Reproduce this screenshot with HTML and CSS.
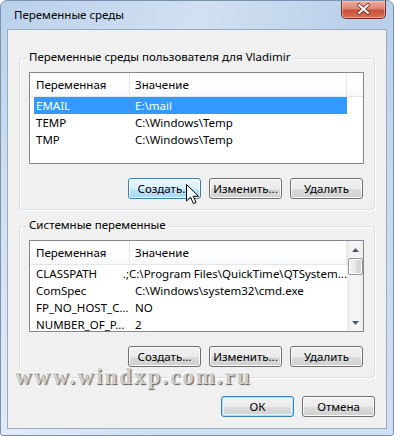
FILE: index.html
```html
<!DOCTYPE html>
<html lang="ru">
<head>
<meta charset="utf-8">
<title>Переменные среды</title>
<link rel="stylesheet" href="styles.css">
</head>
<body>
<div class="window">
  <div class="titlebar">
    <span class="title">Переменные среды</span>
    <div class="close">
      <svg width="45" height="18" viewBox="0 0 45 18">
        <path d="M18 5 L27 13 M27 5 L18 13" stroke="#5a2a22" stroke-width="3.6" stroke-linecap="round"/>
        <path d="M18 5 L27 13 M27 5 L18 13" stroke="#ffffff" stroke-width="2" stroke-linecap="round"/>
      </svg>
    </div>
  </div>
  <div class="client">
    <div class="group">
      <span class="legend">Переменные среды пользователя для Vladimir</span>
      <div class="list">
        <div class="list-main">
          <div class="header">
            <span class="hcol h1">Переменная</span>
            <span class="hcol h2">Значение</span>
          </div>
          <div class="row selected"><span class="c1">EMAIL</span><span class="c2">E:\mail</span></div>
          <div class="row"><span class="c1">TEMP</span><span class="c2">C:\Windows\Temp</span></div>
          <div class="row"><span class="c1">TMP</span><span class="c2">C:\Windows\Temp</span></div>
        </div>
      </div>
      <div class="buttons">
        <button class="btn hover">Создать...</button>
        <button class="btn">Изменить...</button>
        <button class="btn">Удалить</button>
      </div>
    </div>
    <div class="group second">
      <span class="legend">Системные переменные</span>
      <div class="list">
        <div class="list-main">
          <div class="header">
            <span class="hcol h1">Переменная</span>
            <span class="hcol h2">Значение</span>
          </div>
          <div class="row"><span class="c1">CLASSPATH</span><span class="c2">.;C:\Program Files\QuickTime\QTSystem...</span></div>
          <div class="row"><span class="c1">ComSpec</span><span class="c2">C:\Windows\system32\cmd.exe</span></div>
          <div class="row"><span class="c1">FP_NO_HOST_C...</span><span class="c2">NO</span></div>
          <div class="row"><span class="c1">NUMBER_OF_P...</span><span class="c2">2</span></div>
        </div>
        <div class="scrollbar">
          <div class="arrow">
            <svg width="7" height="4" viewBox="0 0 7 4"><path d="M0 4 L3.5 0 L7 4 Z" fill="#505a66"/></svg>
          </div>
          <div class="track"><div class="thumb"></div></div>
          <div class="arrow">
            <svg width="7" height="4" viewBox="0 0 7 4"><path d="M0 0 L3.5 4 L7 0 Z" fill="#505a66"/></svg>
          </div>
        </div>
      </div>
      <div class="buttons">
        <button class="btn">Создать...</button>
        <button class="btn">Изменить...</button>
        <button class="btn">Удалить</button>
      </div>
    </div>
    <div class="dialog-buttons">
      <button class="btn default">ОК</button>
      <button class="btn">Отмена</button>
    </div>
  </div>
  <div class="watermark">www.windxp.com.ru</div>
  <svg class="cursor" width="14" height="21" viewBox="0 0 14 21">
    <path d="M0.5 0.5 L0.5 17 L4.6 13.2 L7.4 19.6 L10 18.5 L7.3 12.3 L12.6 12.3 Z" fill="#ffffff" stroke="#000000" stroke-width="1" stroke-linejoin="miter"/>
  </svg>
</div>
</body>
</html>
```

FILE: styles.css
```css
* {
  box-sizing: border-box;
}

body {
  margin: 0;
  background: #ffffff;
  font-family: "Noto Sans", "Open Sans", sans-serif;
  font-size: 11.5px;
  color: #000000;
}

.window {
  position: relative;
  width: 394px;
  height: 436px;
  border: 1px solid #7a92b0;
  border-radius: 7px 7px 3px 3px;
  padding: 0 6px 6px;
  background:
    linear-gradient(115deg, rgba(255,255,255,0) 0%, rgba(255,255,255,0.35) 35%, rgba(255,255,255,0) 60%),
    linear-gradient(to bottom, #b9d0ea 0%, #c6d9ee 40%, #d0e0f2 100%);
  display: flex;
  flex-direction: column;
  overflow: hidden;
}

.titlebar {
  height: 28px;
  display: flex;
  justify-content: space-between;
  align-items: center;
}

.title {
  padding-left: 7px;
  font-size: 11.5px;
  line-height: 14px;
  color: #000000;
}

.close {
  align-self: flex-start;
  width: 45px;
  height: 18px;
  margin-right: 1px;
  border: 1px solid #6d2f2a;
  border-top: none;
  border-radius: 0 0 5px 5px;
  background: linear-gradient(to bottom, #eeb0a2 0%, #dd8470 45%, #c8503a 55%, #da7352 100%);
  box-shadow: inset 0 0 0 1px rgba(255,210,200,0.5);
}

.close svg {
  display: block;
  margin-top: -1px;
  margin-left: -1px;
}

.client {
  height: 400px;
  border: 1px solid #97abc4;
  background: #f0f0f0;
  padding: 28px 11px 0 11px;
  display: flex;
  flex-direction: column;
}

.group {
  height: 152px;
  border: 1px solid #d5dfe5;
  border-radius: 3px;
  box-shadow: inset 1px 1px 0 #ffffff, 1px 1px 0 #ffffff;
  padding: 0 10px 0 9px;
  display: flex;
  flex-direction: column;
}

.group.second {
  margin-top: 16px;
}

.legend {
  align-self: flex-start;
  margin-top: -9px;
  margin-left: -2px;
  padding: 0 2px;
  background: #f0f0f0;
  line-height: 14px;
}

.list {
  margin-top: 8px;
  height: 92px;
  border: 1px solid #828790;
  background: #ffffff;
  display: flex;
  overflow: hidden;
}

.list-main {
  flex: 1;
  display: flex;
  flex-direction: column;
}

.header {
  height: 24px;
  flex: none;
  display: flex;
  border-bottom: 1px solid #e3e6ea;
  background: linear-gradient(to bottom, #ffffff 0%, #ffffff 50%, #f7f8fa 100%);
}

.hcol {
  display: flex;
  align-items: center;
  color: #000000;
  border-right: 1px solid #e3e8ee;
}

.hcol.h1 {
  width: 100px;
  padding-left: 6px;
}

.hcol.h2 {
  width: 217px;
  padding-left: 5px;
}

.row {
  height: 17px;
  flex: none;
  margin-left: 4px;
  width: 313px;
  display: flex;
  align-items: center;
  white-space: nowrap;
}

.row.selected {
  background: #3399ff;
  color: #ffffff;
}

.row .c1 {
  width: 99px;
  padding-left: 2px;
}

.row .c2 {
  padding-left: 2px;
}

.scrollbar {
  width: 17px;
  flex: none;
  display: flex;
  flex-direction: column;
  background: linear-gradient(to right, #e9e9ea 0%, #f5f5f6 30%, #f5f5f6 70%, #ebebec 100%);
}

.arrow {
  height: 17px;
  flex: none;
  display: flex;
  align-items: center;
  justify-content: center;
}

.track {
  flex: 1;
}

.thumb {
  height: 17px;
  margin: 0 1px;
  border: 1px solid #979797;
  border-radius: 2px;
  background: linear-gradient(to right, #f3f3f3 0%, #e8e8e9 50%, #d8d8da 51%, #d4d4d6 100%);
  box-shadow: inset 0 0 0 1px #fbfbfb;
}

.buttons {
  margin-top: 14px;
  display: flex;
  justify-content: flex-end;
  gap: 8px;
  padding-right: 1px;
}

.btn {
  width: 73px;
  height: 21px;
  padding: 0;
  border: 1px solid #707070;
  border-radius: 3px;
  background: linear-gradient(to bottom, #f2f2f2 0%, #ebebeb 50%, #dddddd 50%, #cfcfcf 100%);
  box-shadow: inset 0 0 0 1px #fcfcfc;
  font-family: "Noto Sans", "Open Sans", sans-serif;
  font-size: 11.5px;
  line-height: 17px;
  color: #000000;
}

.btn.hover {
  border-color: #3c7fb1;
  background: linear-gradient(to bottom, #eaf6fd 0%, #d9f0fc 50%, #bee6fd 50%, #a7d9f5 100%);
}

.btn.default {
  border-color: #3c7fb1;
  box-shadow: inset 0 0 0 1px #a6e1f8, inset 0 0 0 2px #e6f5fc;
}

.dialog-buttons {
  margin-top: 18px;
  display: flex;
  justify-content: flex-end;
  gap: 8px;
}

.watermark {
  position: absolute;
  left: 14px;
  top: 364px;
  font-family: "Liberation Serif", serif;
  font-weight: bold;
  font-size: 23px;
  line-height: 23px;
  letter-spacing: 2px;
  color: #cfcfcf;
  text-shadow: 1px 1px 1px #5a5a5a, -1px -1px 0 #ffffff;
  white-space: nowrap;
}

.cursor {
  position: absolute;
  left: 185px;
  top: 183px;
}
```
